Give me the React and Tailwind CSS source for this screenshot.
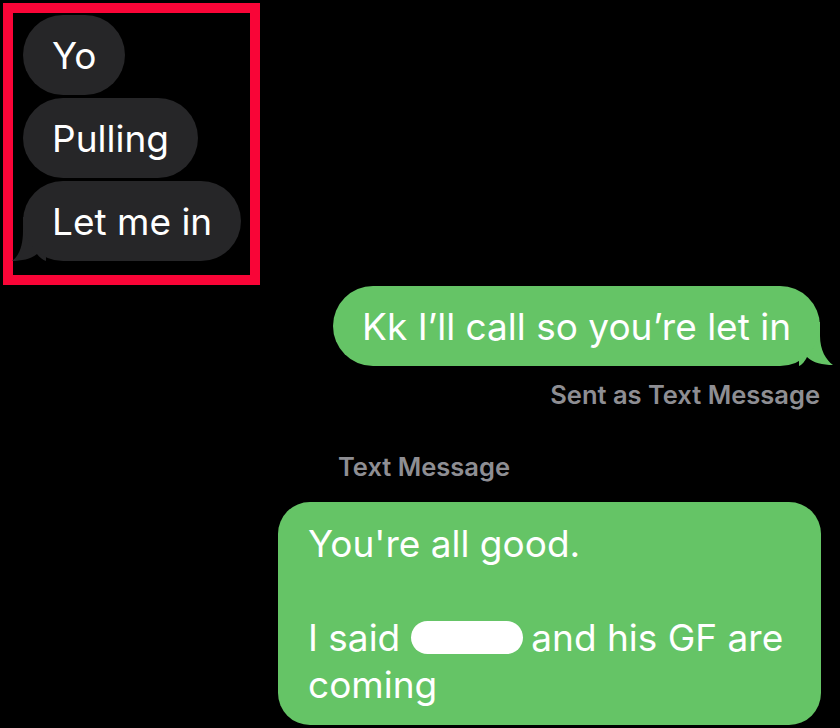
import React from "react";

const font = { fontFamily: "Inter, 'Noto Sans', sans-serif" };

function GrayBubble({ children, tail }) {
  return (
    <div className="relative self-start">
      {tail && (
        <svg
          className="absolute bottom-0 left-[-11px]"
          width="40"
          height="44"
          viewBox="0 0 40 44"
        >
          <path
            d="M11 0 L34 0 L34 44 C31 43 27 40 25 37 C19 42 9 44 0 44 C7 39 11 29 11 14 Z"
            fill="#262628"
          />
        </svg>
      )}
      <div className="relative flex h-[80px] items-center rounded-full bg-[#262628] px-[29px] text-[37px] leading-none text-white">
        {children}
      </div>
    </div>
  );
}

export default function App() {
  return (
    <div
      className="relative flex h-[728px] w-[840px] flex-col overflow-hidden bg-black"
      style={font}
    >
      <div className="ml-[3px] mt-[3px] flex h-[282px] w-[257px] flex-col gap-[3px] border-[10px] border-[#f90537] pl-[10px] pt-[2px]">
        <GrayBubble>Yo</GrayBubble>
        <GrayBubble>Pulling</GrayBubble>
        <GrayBubble tail>Let me in</GrayBubble>
      </div>

      <div className="mr-[20px] mt-[1px] flex justify-end">
        <div className="relative">
          <svg
            className="absolute bottom-0 right-[-13px]"
            width="40"
            height="44"
            viewBox="0 0 40 44"
          >
            <path
              d="M27 0 L6 0 L6 44 C9 43 12 39 14 35 C20 41 30 43 40 43 C33 38 27 28 27 14 Z"
              fill="#65c466"
            />
          </svg>
          <div className="relative flex h-[80px] items-center rounded-full bg-[#65c466] px-[29px] text-[37px] leading-none text-white">
            Kk I’ll call so you’re let in
          </div>
        </div>
      </div>

      <div className="mr-[20px] mt-[16px] flex justify-end text-[25.5px] font-semibold leading-none text-[#8e8e93]">
        Sent as Text Message
      </div>

      <div className="ml-[338px] mt-[46px] text-[25.5px] font-semibold leading-none text-[#8e8e93]">
        Text Message
      </div>

      <div className="ml-[278px] mt-[23px] h-[223px] w-[543px] rounded-[32px] bg-[#65c466] px-[30px] pt-[18px] text-[37px] leading-[47px] text-white">
        <div>You're all good.</div>
        <div className="h-[47px]" />
        <div className="flex items-center whitespace-nowrap">
          I said
          <span className="ml-[11px] mr-[8px] inline-block h-[33px] w-[112px] rounded-full bg-white" />
          and his GF are
        </div>
        <div>coming</div>
      </div>
    </div>
  );
}
